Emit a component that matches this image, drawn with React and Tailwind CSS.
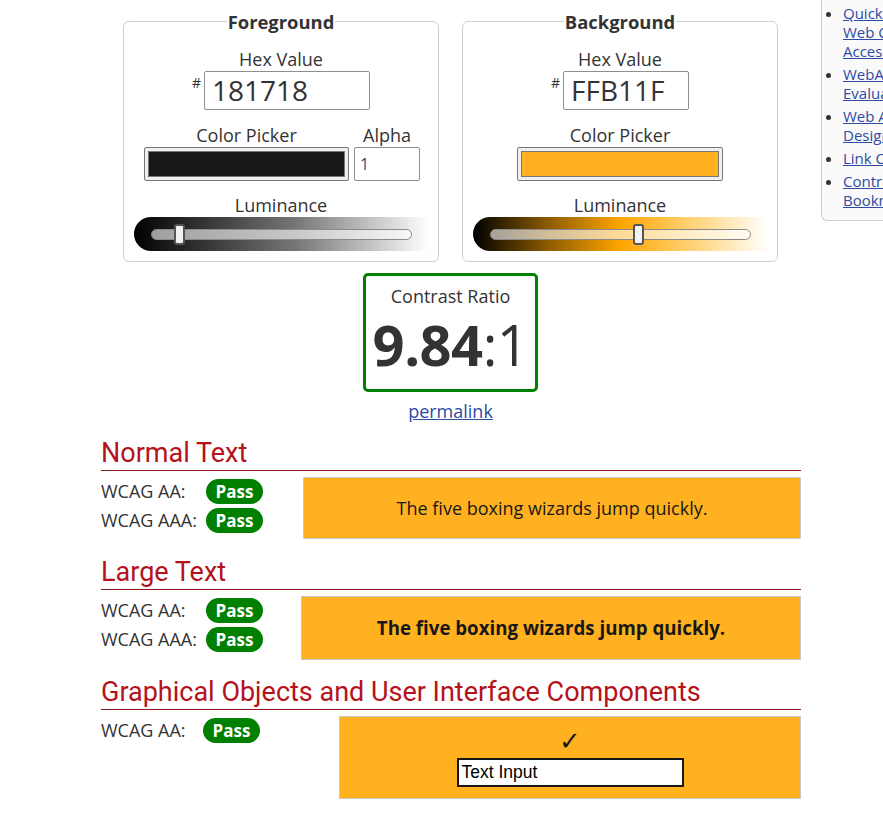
import React from "react";

const sans = { fontFamily: '"Open Sans", "Liberation Sans", sans-serif' };

const links = [
  ["Quick Reference:", "Web Content", "Accessibility Guidelines"],
  ["WebAIM's WAVE", "Evaluation Tool"],
  ["Web Accessible", "Design Principles"],
  ["Link Contrast Checker"],
  ["Contrast Checker", "Bookmarklet"],
];

const Badge = () => (
  <span className="inline-flex items-center justify-center w-[57px] h-[25px] rounded-full bg-[#008000] text-white font-bold text-[17px] leading-none">
    Pass
  </span>
);

const Slider = ({ gradient, thumb }) => (
  <div className="w-[295px] h-[34px] rounded-l-full mx-auto flex items-center px-[17px]" style={{ background: gradient }}>
    <div className="relative w-full h-[11px] rounded-full border border-[#8a8a8a] bg-[rgba(255,255,255,0.6)]">
      <div
        className="absolute top-[-6px] w-[11px] h-[21px] rounded-[3px] border-2 border-[#555] bg-[#f2f2f2]"
        style={{ left: thumb }}
      />
    </div>
  </div>
);

const Swatch = ({ color, width }) => (
  <div className={`${width} h-[34px] border border-[#767676] bg-[#efefef] rounded-[2px] p-[3px]`}>
    <div className="w-full h-full border border-[#777]" style={{ background: color }} />
  </div>
);

const ColorBox = ({ title, hex, hexWidth, color, alpha, gradient, thumb }) => (
  <fieldset className="w-[316px] border border-[#cfcfcf] rounded-[6px] pt-[14px] pb-[10px]">
    <legend className="mx-auto px-[1px] font-bold text-[18.4px] leading-[23px] text-[#333]">{title}</legend>
    <div className="text-center text-[18px] leading-[24px]">Hex Value</div>
    <div className="flex justify-center">
      <span className="text-[14px] leading-[20px] mr-[3px] mt-[2px]">#</span>
      <div className={`${hexWidth} h-[39px] border border-[#8f8f8f] rounded-[2px] px-[7px] text-[28px] leading-[37px] text-[#333]`}>
        {hex}
      </div>
    </div>
    {alpha ? (
      <div className="flex justify-center gap-[5px] mt-[13px] ml-[2px]">
        <div>
          <div className="text-center text-[18px] leading-[24px]">Color Picker</div>
          <Swatch color={color} width="w-[205px]" />
        </div>
        <div>
          <div className="text-center text-[18px] leading-[24px]">Alpha</div>
          <div className="w-[66px] h-[34px] border border-[#8f8f8f] rounded-[2px] px-[5px] text-[16px] leading-[32px] text-[#2a4a86]">
            1
          </div>
        </div>
      </div>
    ) : (
      <div className="flex flex-col items-center mt-[13px]">
        <div className="text-center text-[18px] leading-[24px]">Color Picker</div>
        <Swatch color={color} width="w-[206px]" />
      </div>
    )}
    <div className="text-center text-[18px] leading-[24px] mt-[12px]">Luminance</div>
    <Slider gradient={gradient} thumb={thumb} />
  </fieldset>
);

const Heading = ({ children }) => (
  <h2
    className="text-[27px] leading-[32px] text-[#b5121b] border-b border-[#8e1b1e] pb-[1px]"
    style={{ fontFamily: 'Roboto, "Liberation Sans", sans-serif' }}
  >
    {children}
  </h2>
);

const Row = ({ label, badgeLeft }) => (
  <div className="flex items-center h-[29px]">
    <span className="text-[18px] text-[#333]" style={{ width: badgeLeft }}>
      {label}
    </span>
    <Badge />
  </div>
);

export default function App() {
  return (
    <div className="w-[883px] h-[818px] overflow-hidden bg-white text-[#333]" style={sans}>
      <div className="flex">
        <main className="ml-[101px] w-[700px] shrink-0 pt-[10px]">
          <div className="flex gap-[23px] ml-[22px]">
            <ColorBox
              title="Foreground"
              hex="181718"
              hexWidth="w-[166px]"
              color="#181718"
              alpha
              gradient="linear-gradient(to right, #000 0%, #181718 10%, #777 55%, #fff 100%)"
              thumb="22px"
            />
            <ColorBox
              title="Background"
              hex="FFB11F"
              hexWidth="w-[126px]"
              color="#FFB11F"
              gradient="linear-gradient(to right, #000 0%, #8a5a00 25%, #ffa500 50%, #ffd98a 78%, #fff 100%)"
              thumb="142px"
            />
          </div>

          <div className="flex flex-col items-center mt-[11px] mr-[1px]">
            <div className="w-[175px] h-[119px] border-[3px] border-[#008000] rounded-[5px] flex flex-col items-center pt-[8px]">
              <div className="text-[18px] leading-[24px]">Contrast Ratio</div>
              <div className="text-[56px] leading-[56px] mt-[8px] tracking-[-0.5px]">
                <b className="font-bold">9.84</b>:1
              </div>
            </div>
            <a href="#" className="mt-[7px] text-[18px] leading-[24px] text-[#2e4ba3] underline">
              permalink
            </a>
          </div>

          <section className="mt-[14px]">
            <Heading>Normal Text</Heading>
            <div className="flex mt-[6px]">
              <div className="w-[202px]">
                <Row label="WCAG AA:" badgeLeft="105px" />
                <Row label="WCAG AAA:" badgeLeft="105px" />
              </div>
              <div className="flex-1 h-[62px] border border-[#c8c8c8] bg-[#FFB11F] flex items-center justify-center text-[18px] text-[#181718]">
                The five boxing wizards jump quickly.
              </div>
            </div>
          </section>

          <section className="mt-[17px]">
            <Heading>Large Text</Heading>
            <div className="flex mt-[6px]">
              <div className="w-[200px]">
                <Row label="WCAG AA:" badgeLeft="105px" />
                <Row label="WCAG AAA:" badgeLeft="105px" />
              </div>
              <div className="flex-1 h-[64px] border border-[#c8c8c8] bg-[#FFB11F] flex items-center justify-center text-[18.7px] font-bold text-[#181718]">
                The five boxing wizards jump quickly.
              </div>
            </div>
          </section>

          <section className="mt-[16px]">
            <Heading>Graphical Objects and User Interface Components</Heading>
            <div className="flex mt-[6px]">
              <div className="w-[238px]">
                <Row label="WCAG AA:" badgeLeft="102px" />
              </div>
              <div className="flex-1 h-[83px] border border-[#c8c8c8] bg-[#FFB11F] flex flex-col items-center pt-[7px]">
                <div className="text-[26px] leading-[32px] text-[#181718]">✓</div>
                <div
                  className="w-[227px] h-[29px] mt-[2px] bg-white border-2 border-[#181718] px-[3px] text-[17.5px] leading-[25px] text-black"
                  style={{ fontFamily: '"Liberation Sans", Arial, sans-serif' }}
                >
                  Text Input
                </div>
              </div>
            </div>
          </section>
        </main>

        <aside className="ml-[20px] w-[220px] shrink-0 h-[221px] border-l border-b border-[#cfcfcf] rounded-bl-[6px] bg-[#fafafa] pt-[4px]">
          <ul className="list-disc pl-[21px] text-[15px] leading-[19px] marker:text-[#333]">
            {links.map((lines, i) => (
              <li key={i} className="mb-[4px]">
                <a href="#" className="text-[#2e4ba3] underline">
                  {lines.map((l, j) => (
                    <React.Fragment key={j}>
                      {j > 0 && <br />}
                      {l}
                    </React.Fragment>
                  ))}
                </a>
              </li>
            ))}
          </ul>
        </aside>
      </div>
    </div>
  );
}
